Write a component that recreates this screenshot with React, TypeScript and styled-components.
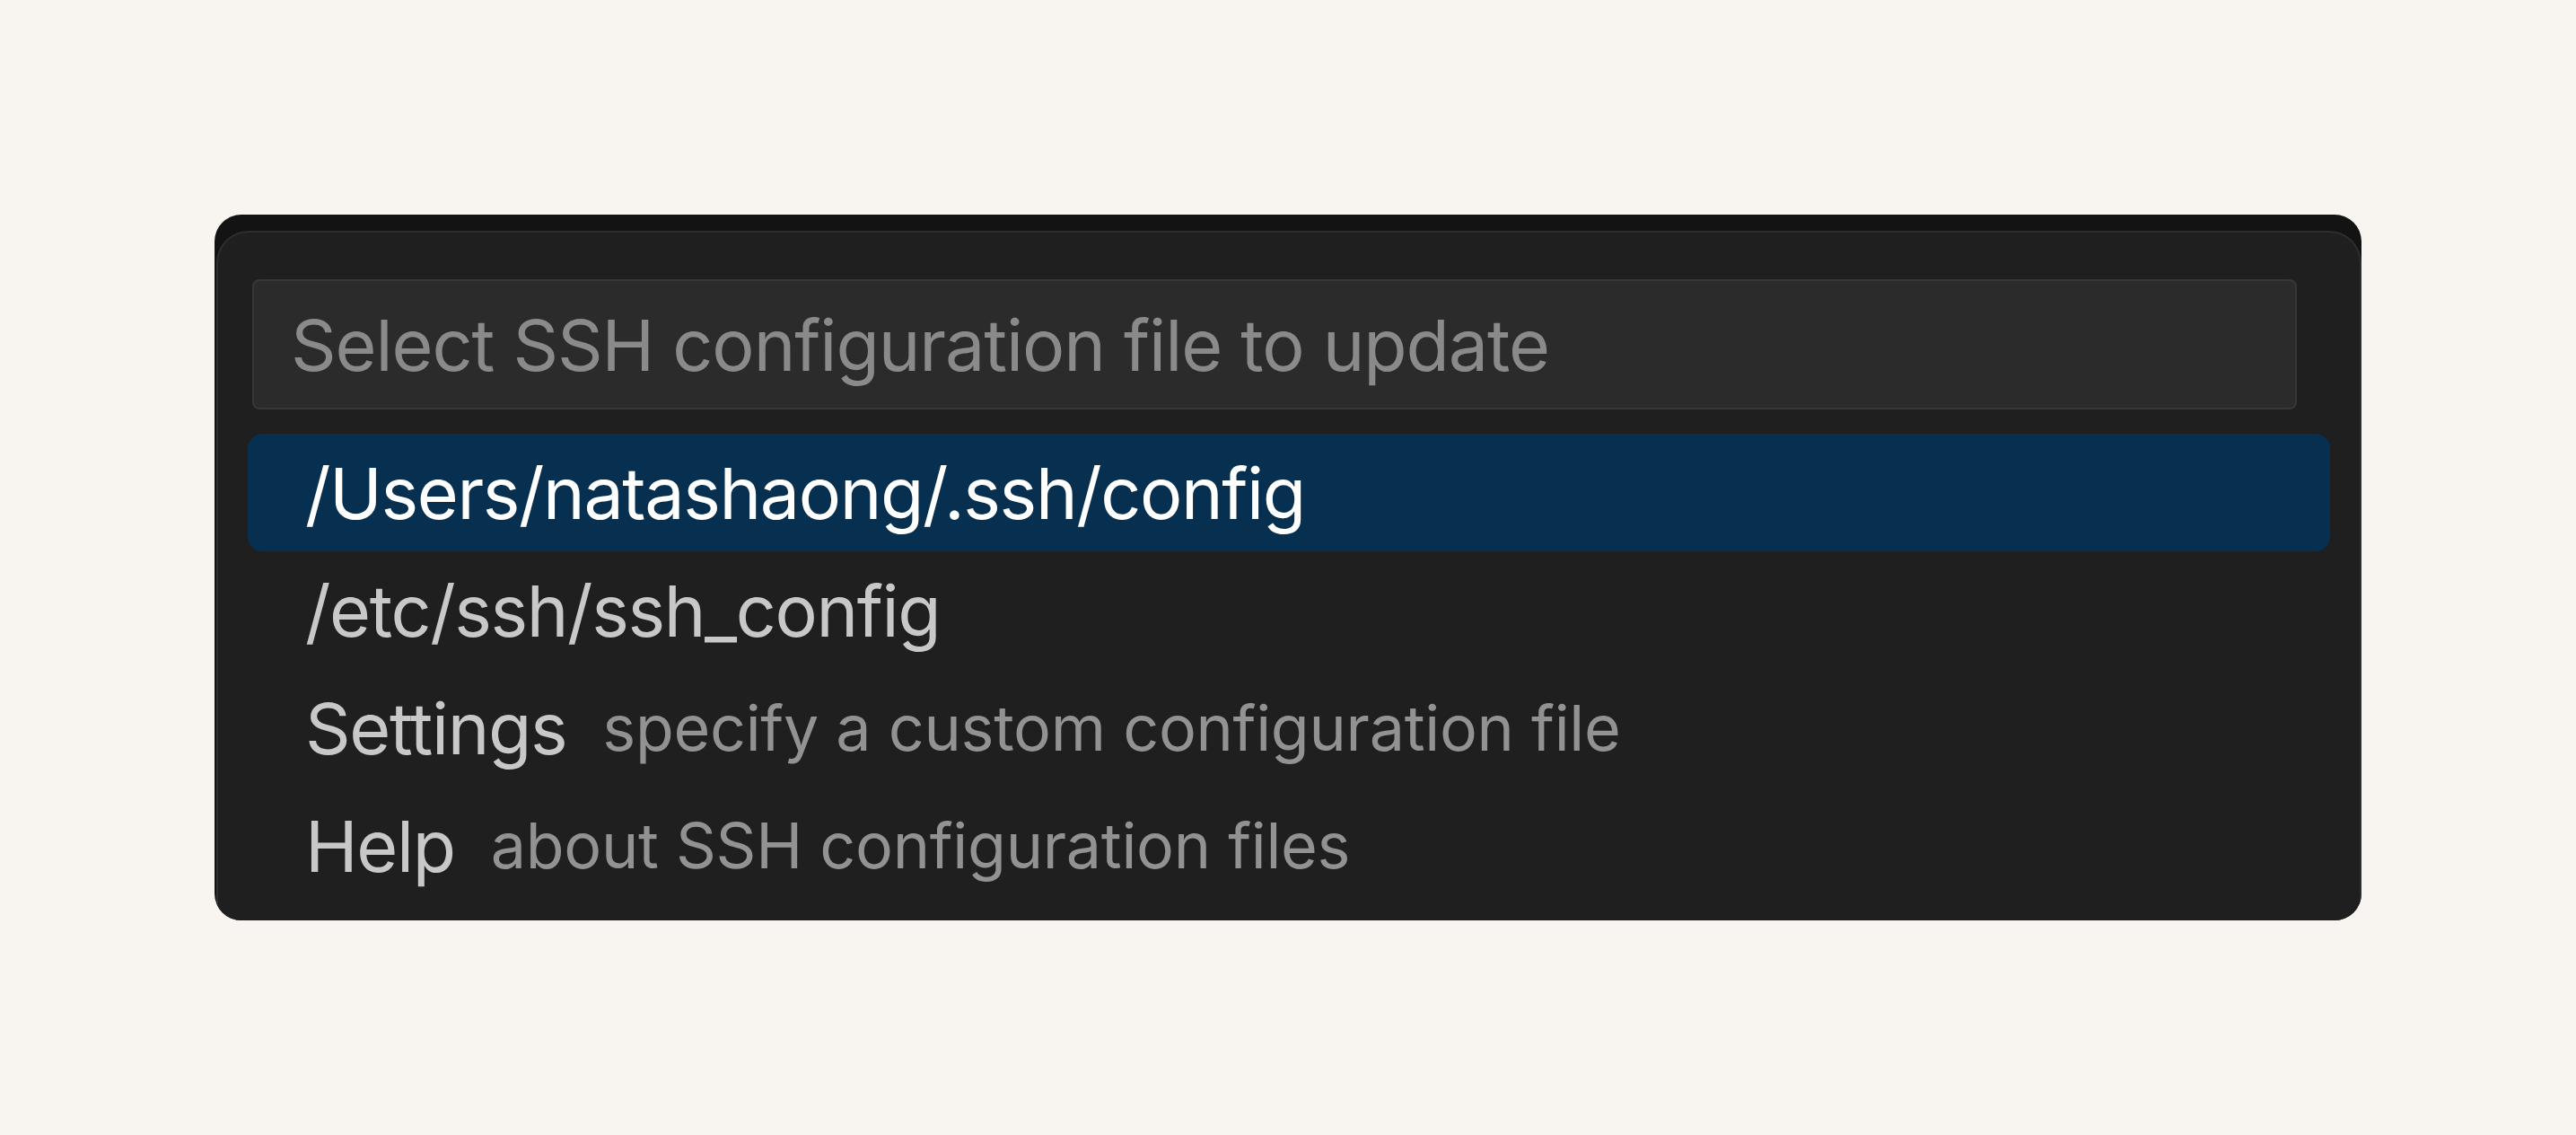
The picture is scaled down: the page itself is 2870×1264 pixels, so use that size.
import React from 'react'
import styled, { createGlobalStyle } from 'styled-components'

const GlobalStyle = createGlobalStyle`
  html, body {
    margin: 0;
    padding: 0;
    background: #f8f5f0;
  }
  body {
    font-family: Inter, "Noto Sans", "Liberation Sans", sans-serif;
  }
`

const Page = styled.div`
  width: 2870px;
  height: 1264px;
  box-sizing: border-box;
  padding: 239px 0 0 239px;
`

const Frame = styled.div`
  width: 2392px;
  height: 786px;
  box-sizing: border-box;
  padding: 18px 0 0 2px;
  background: #131313;
  border-radius: 30px;
  overflow: hidden;
  display: flex;
`

const Widget = styled.div`
  flex: 1;
  box-sizing: border-box;
  background: #1f1f1f;
  border: 2px solid #2e2e2e;
  border-bottom: none;
  border-radius: 36px 36px 0 0;
  padding: 52px 33px 0 33px;
  display: flex;
  flex-direction: column;
`

const Input = styled.div`
  box-sizing: border-box;
  height: 145px;
  margin: 0 37px 27px 5px;
  background: #2b2b2b;
  border: 2px solid #373737;
  border-radius: 8px;
  padding: 0 0 0 41px;
  display: flex;
  align-items: center;
  color: #8a8a8a;
  font-size: 79px;
  letter-spacing: -1.1px;
`

const List = styled.div`
  display: flex;
  flex-direction: column;
`

const Row = styled.div<{ $active?: boolean }>`
  height: 131px;
  box-sizing: border-box;
  padding: 0 0 0 64px;
  border-radius: 16px;
  display: flex;
  align-items: center;
  gap: 40px;
  background: ${(p) => (p.$active ? '#073050' : 'transparent')};
  color: ${(p) => (p.$active ? '#ffffff' : '#c8c8c8')};
  white-space: nowrap;
`

const Label = styled.span`
  font-size: 79px;
  letter-spacing: -1.4px;
`

const Description = styled.span`
  font-size: 70px;
  color: #929292;
  letter-spacing: -0.3px;
`

const items = [
  { label: '/Users/natashaong/.ssh/config', active: true },
  { label: '/etc/ssh/ssh_config' },
  { label: 'Settings', description: 'specify a custom configuration file' },
  { label: 'Help', description: 'about SSH configuration files' },
]

const App: React.FC = () => {
  return (
    <>
      <GlobalStyle />
      <Page>
        <Frame>
          <Widget>
            <Input>Select SSH configuration file to update</Input>
            <List>
              {items.map((item) => (
                <Row key={item.label} $active={item.active}>
                  <Label>{item.label}</Label>
                  {item.description && (
                    <Description>{item.description}</Description>
                  )}
                </Row>
              ))}
            </List>
          </Widget>
        </Frame>
      </Page>
    </>
  )
}

export default App
